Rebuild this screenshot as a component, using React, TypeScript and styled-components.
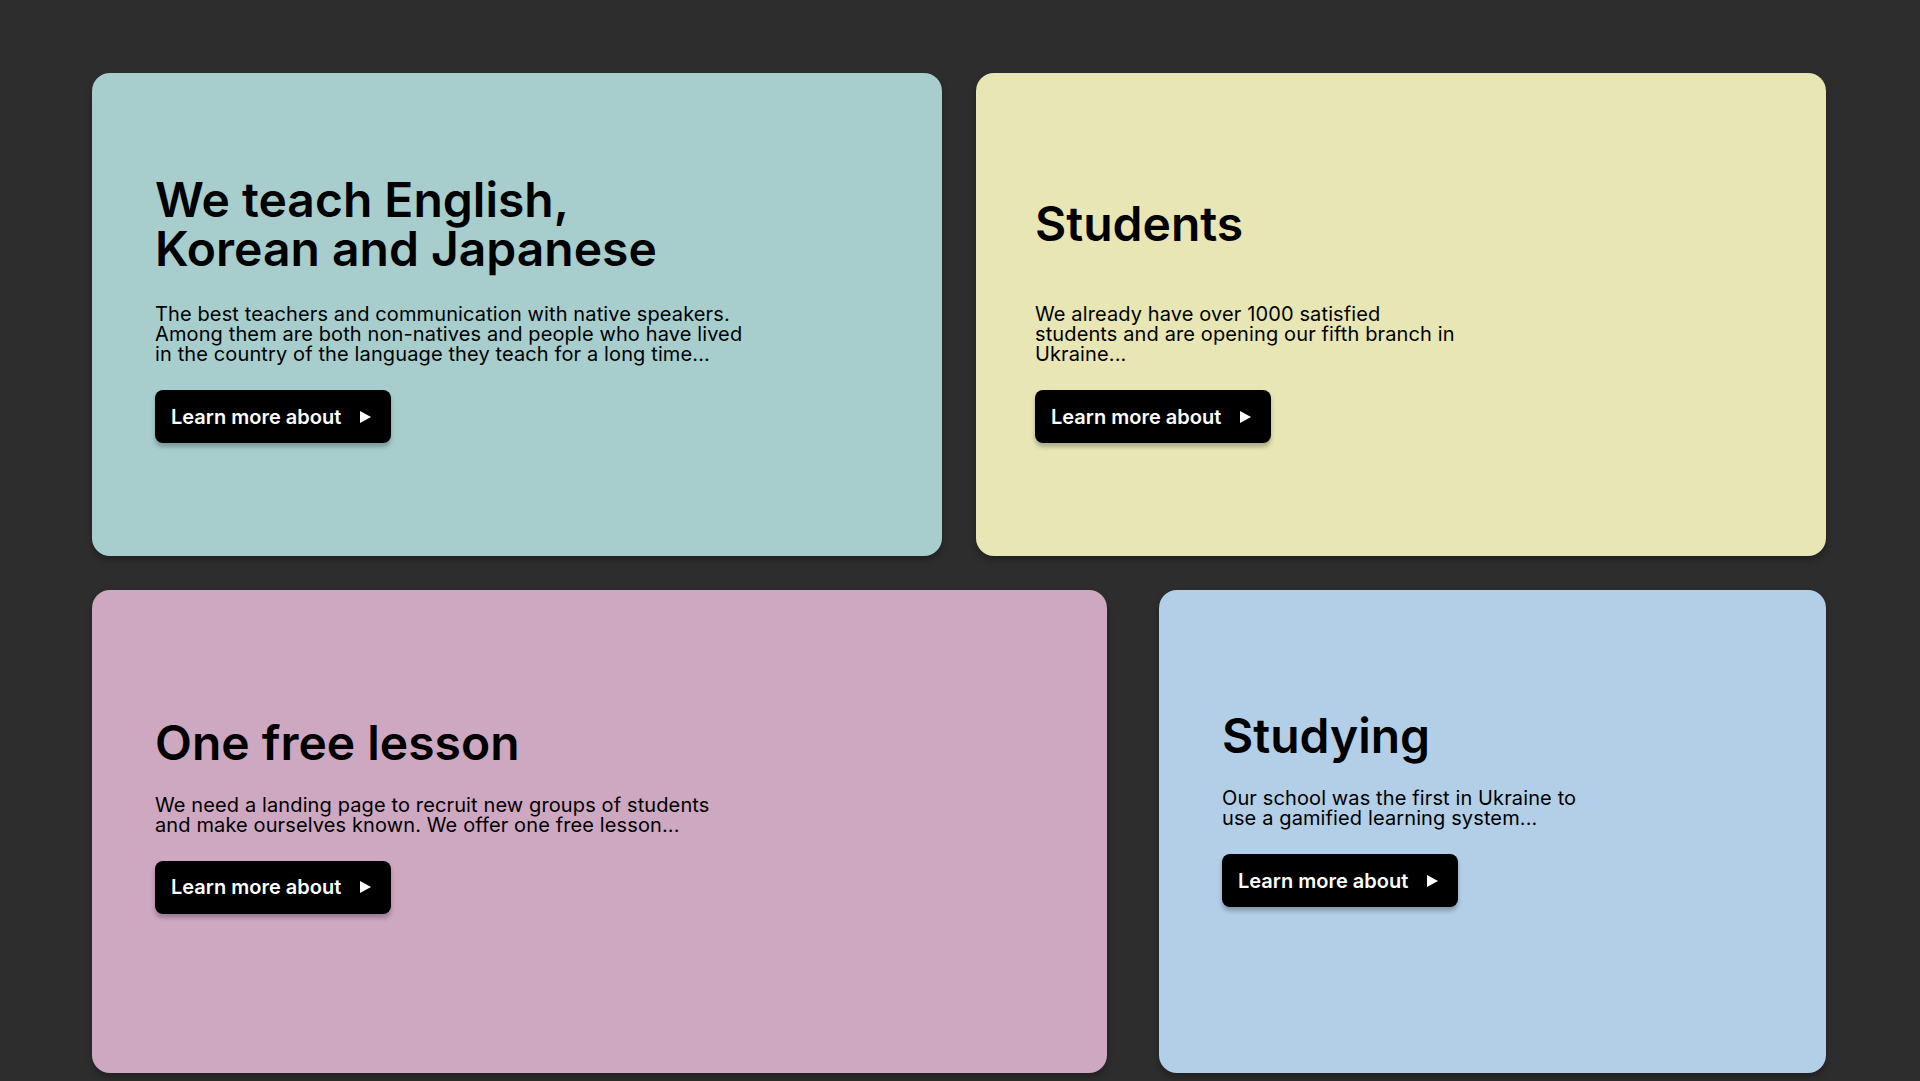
import React from "react";
import styled, { createGlobalStyle } from "styled-components";

const GlobalStyle = createGlobalStyle`
  html, body {
    margin: 0;
    padding: 0;
    background: #2d2d2d;
  }
  body {
    font-family: Inter, "Noto Sans", "Liberation Sans", sans-serif;
    -webkit-font-smoothing: antialiased;
  }
  * { box-sizing: border-box; }
`;

const Page = styled.main`
  display: flex;
  flex-direction: column;
  gap: 34px;
  padding: 73px 94px 0 92px;
  min-height: 1081px;
`;

const Row = styled.section<{ $cols: string; $gap: number }>`
  display: grid;
  grid-template-columns: ${(p) => p.$cols};
  gap: ${(p) => p.$gap}px;
`;

const Card = styled.article<{ $bg: string; $padLeft: number; $padBottom: number }>`
  height: 483px;
  border-radius: 18px;
  background: ${(p) => p.$bg};
  box-shadow: 0 4px 6px rgba(0, 0, 0, 0.28);
  display: flex;
  flex-direction: column;
  justify-content: center;
  align-items: flex-start;
  padding: 0 40px ${(p) => p.$padBottom}px ${(p) => p.$padLeft}px;
  color: #000;
`;

const TitleBox = styled.div<{ $minHeight: number }>`
  min-height: ${(p) => p.$minHeight}px;
  display: flex;
  align-items: center;
  margin-bottom: ${(p) => (p.$minHeight > 60 ? 30 : 26)}px;
`;

const Title = styled.h2<{ $size: number; $lh: number }>`
  margin: 0;
  font-family: Inter, "Noto Sans", sans-serif;
  font-weight: 600;
  font-size: ${(p) => p.$size}px;
  line-height: ${(p) => p.$lh}px;
`;

const Text = styled.p<{ $max: number }>`
  margin: 0 0 26px;
  max-width: ${(p) => p.$max}px;
  font-family: Inter, "Noto Sans", sans-serif;
  font-weight: 400;
  font-size: 20px;
  line-height: 20px;
  letter-spacing: 0.12px;
`;

const Button = styled.button`
  display: inline-flex;
  align-items: center;
  gap: 19px;
  height: 53px;
  padding: 0 20px 0 16px;
  border: none;
  border-radius: 8px;
  background: #000;
  color: #fff;
  font-family: Inter, "Noto Sans", sans-serif;
  font-weight: 600;
  font-size: 20px;
  line-height: 1;
  box-shadow: 0 4px 4px rgba(0, 0, 0, 0.25);
  cursor: pointer;
`;

const Arrow = () => (
  <svg width="11" height="12" viewBox="0 0 11 12" aria-hidden="true">
    <polygon points="0,0 11,6 0,12" fill="#fff" />
  </svg>
);

type CardData = {
  bg: string;
  title: React.ReactNode;
  titleSize: number;
  titleLh: number;
  titleBox: number;
  text: string;
  max: number;
  padLeft: number;
  padBottom: number;
};

const row1: CardData[] = [
  {
    bg: "#a7cecd",
    title: (
      <>
        We teach English,
        <br />
        Korean and Japanese
      </>
    ),
    titleSize: 48,
    titleLh: 49,
    titleBox: 100,
    text:
      "The best teachers and communication with native speakers. Among them are both non-natives and people who have lived in the country of the language they teach for a long time...",
    max: 600,
    padLeft: 63,
    padBottom: 12,
  },
  {
    bg: "#e7e6b4",
    title: "Students",
    titleSize: 48,
    titleLh: 52,
    titleBox: 100,
    text:
      "We already have over 1000 satisfied students and are opening our fifth branch in Ukraine...",
    max: 425,
    padLeft: 59,
    padBottom: 12,
  },
];

const row2: CardData[] = [
  {
    bg: "#cea7c0",
    title: "One free lesson",
    titleSize: 48,
    titleLh: 52,
    titleBox: 0,
    text:
      "We need a landing page to recruit new groups of students and make ourselves known. We offer one free lesson...",
    max: 570,
    padLeft: 63,
    padBottom: 33,
  },
  {
    bg: "#b3cee7",
    title: "Studying",
    titleSize: 48,
    titleLh: 52,
    titleBox: 0,
    text: "Our school was the first in Ukraine to use a gamified learning system...",
    max: 372,
    padLeft: 63,
    padBottom: 46,
  },
];

const InfoCard = ({ c }: { c: CardData }) => (
  <Card $bg={c.bg} $padLeft={c.padLeft} $padBottom={c.padBottom}>
    <TitleBox $minHeight={c.titleBox}>
      <Title $size={c.titleSize} $lh={c.titleLh}>
        {c.title}
      </Title>
    </TitleBox>
    <Text $max={c.max}>{c.text}</Text>
    <Button type="button">
      Learn more about
      <Arrow />
    </Button>
  </Card>
);

export default function App() {
  return (
    <>
      <GlobalStyle />
      <Page>
        <Row $cols="1fr 1fr" $gap={34}>
          {row1.map((c, i) => (
            <InfoCard key={i} c={c} />
          ))}
        </Row>
        <Row $cols="1015fr 667fr" $gap={52}>
          {row2.map((c, i) => (
            <InfoCard key={i} c={c} />
          ))}
        </Row>
      </Page>
    </>
  );
}
